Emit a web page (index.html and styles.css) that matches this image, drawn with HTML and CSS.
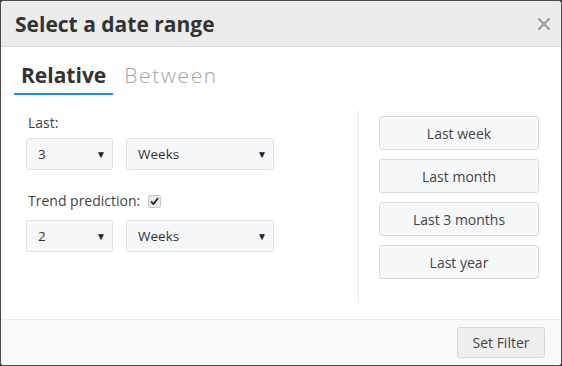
FILE: index.html
```html
<!DOCTYPE html>
<html lang="en">
<head>
    <meta charset="UTF-8">
    <meta name="viewport" content="width=device-width, initial-scale=1.0">
    <title>Select a date range</title>
    <link rel="stylesheet" href="styles.css">
</head>
<body>
    <div class="modal">
        <div class="modal-header">
            <h2>Select a date range</h2>
            <button class="close" aria-label="Close">
                <svg width="14" height="14" viewBox="0 0 14 14">
                    <path d="M1.5 1.5 L12.5 12.5 M12.5 1.5 L1.5 12.5" stroke="#999" stroke-width="2.2" fill="none"/>
                </svg>
            </button>
        </div>

        <div class="modal-body">
            <div class="tabs">
                <span class="tab active">Relative</span>
                <span class="tab">Between</span>
            </div>

            <div class="columns">
                <div class="left">
                    <div class="label">Last:</div>
                    <div class="select-row">
                        <div class="select small"><span>3</span><span class="arrow">&#9660;</span></div>
                        <div class="select wide"><span>Weeks</span><span class="arrow">&#9660;</span></div>
                    </div>

                    <div class="label trend">Trend prediction:
                        <span class="checkbox">
                            <svg width="9" height="8" viewBox="0 0 9 8">
                                <path d="M1 4.5 L3.5 7 L8 1" stroke="#333" stroke-width="2" fill="none"/>
                            </svg>
                        </span>
                    </div>
                    <div class="select-row">
                        <div class="select small"><span>2</span><span class="arrow">&#9660;</span></div>
                        <div class="select wide"><span>Weeks</span><span class="arrow">&#9660;</span></div>
                    </div>
                </div>

                <div class="right">
                    <button class="quick">Last week</button>
                    <button class="quick">Last month</button>
                    <button class="quick">Last 3 months</button>
                    <button class="quick">Last year</button>
                </div>
            </div>
        </div>

        <div class="modal-footer">
            <button class="set-filter">Set Filter</button>
        </div>
    </div>
</body>
</html>
```

FILE: styles.css
```css
body {
    font-family: "Open Sans", Arial, sans-serif;
    margin: 0;
    padding: 0;
    background-color: #3c3c3c;
    color: #333;
    font-size: 14px;
}
.modal {
    height: 366px;
    box-sizing: border-box;
    background-color: #fff;
    border: 1px solid #4a4a4a;
    border-radius: 4px;
    overflow: hidden;
    display: flex;
    flex-direction: column;
}
.modal-header {
    height: 45px;
    background-color: #ececec;
    border-bottom: 1px solid #dcdcdc;
    display: flex;
    align-items: center;
    justify-content: space-between;
    padding: 0 10px 0 14px;
}
.modal-header h2 {
    margin: 0;
    font-size: 21px;
    font-weight: 700;
    color: #333;
}
.close {
    background: none;
    border: none;
    padding: 0;
    display: flex;
    cursor: pointer;
}
.modal-body {
    flex: 1;
    padding: 15px 0 16px;
}
.tabs {
    display: flex;
    padding-left: 13px;
    gap: 4px;
}
.tab {
    font-size: 21px;
    line-height: 27px;
    padding: 0 7px 4px;
    color: #a4a4a4;
    font-weight: 300;
    letter-spacing: 1.6px;
    border-bottom: 2px solid transparent;
}
.tab.active {
    font-weight: 700;
    letter-spacing: 0;
    color: #333;
    border-bottom-color: #1a8fe6;
}
.columns {
    display: flex;
    margin-top: 15px;
}
.left {
    width: 357px;
    padding: 4px 0 0 25px;
    box-sizing: border-box;
}
.label {
    line-height: 18px;
    margin-bottom: 6px;
    padding-left: 2px;
    color: #444;
}
.label.trend {
    margin-top: 22px;
    margin-bottom: 10px;
    display: flex;
    align-items: center;
}
.checkbox {
    width: 11px;
    height: 11px;
    margin-left: 8px;
    border: 1px solid #c8c8c8;
    border-radius: 2px;
    background-color: #eaeaea;
    display: flex;
    align-items: center;
    justify-content: center;
}
.select-row {
    display: flex;
    gap: 13px;
}
.select {
    height: 32px;
    box-sizing: border-box;
    background-color: #f7f8fa;
    border: 1px solid #dfe0ea;
    border-radius: 3px;
    display: flex;
    align-items: center;
    justify-content: space-between;
    padding: 0 6px 0 11px;
    font-size: 13.5px;
    color: #333;
}
.select.small {
    width: 87px;
}
.select.wide {
    width: 148px;
}
.arrow {
    font-size: 10px;
    color: #222;
}
.right {
    flex: 1;
    border-left: 1px solid #ececec;
    padding: 6px 22px 24px 20px;
    display: flex;
    flex-direction: column;
    gap: 9px;
}
.quick {
    height: 34px;
    font-family: "Open Sans", Arial, sans-serif;
    font-size: 14px;
    color: #444;
    background-color: #f7f8fa;
    border: 1px solid #dadada;
    border-radius: 3px;
    cursor: pointer;
}
.modal-footer {
    height: 45px;
    background-color: #f9f9f9;
    border-top: 1px solid #ececec;
    display: flex;
    align-items: center;
    justify-content: flex-end;
    padding-right: 16px;
}
.set-filter {
    height: 31px;
    width: 88px;
    font-family: "Open Sans", Arial, sans-serif;
    font-size: 14px;
    color: #444;
    background-color: #efefef;
    border: 1px solid #d8d8d8;
    border-radius: 3px;
    cursor: pointer;
}
```
